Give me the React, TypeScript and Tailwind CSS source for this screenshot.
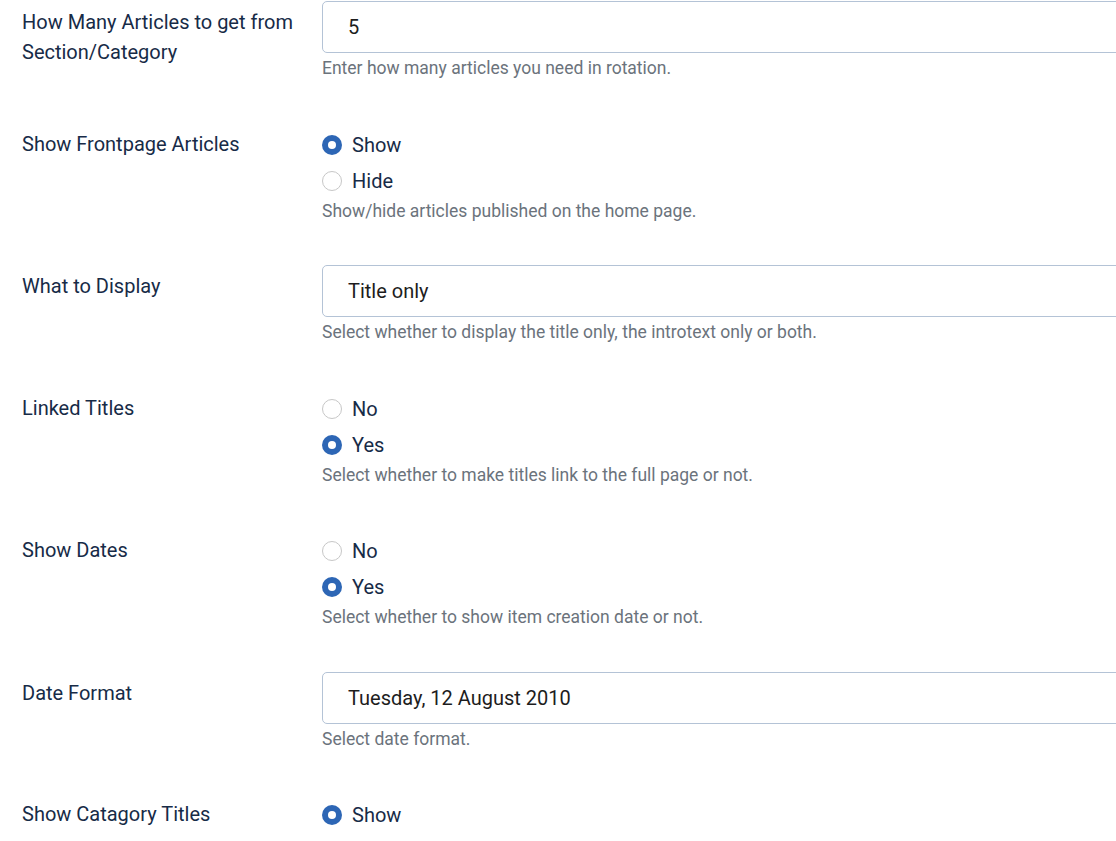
import React from "react";

const font = { fontFamily: "Roboto, 'Noto Sans', sans-serif" };

function Radio({ checked, label }: { checked: boolean; label: string }) {
  return (
    <div className="flex h-[36px] items-center">
      {checked ? (
        <span className="flex h-[20px] w-[20px] items-center justify-center rounded-full bg-[#2d66b5]">
          <span className="h-[8px] w-[8px] rounded-full bg-white" />
        </span>
      ) : (
        <span className="h-[20px] w-[20px] rounded-full border border-[#c7c7c7] bg-white" />
      )}
      <span className="ml-[10px] text-[20px] text-[#172b47]">{label}</span>
    </div>
  );
}

function Row({ label, children }: { label: React.ReactNode; children: React.ReactNode }) {
  return (
    <div className="mb-[43.5px] flex">
      <div className="w-[300px] shrink-0 pt-[6px] text-[20px] leading-[30px] text-[#172b47]">{label}</div>
      <div className="flex-1">{children}</div>
    </div>
  );
}

function Field({ value }: { value: string }) {
  return (
    <div className="flex h-[52px] w-[820px] items-center rounded-[5px] border border-[#b4c3d6] bg-white pl-[25px] text-[20px] text-[#1d1d1d]">
      {value}
    </div>
  );
}

function Help({ text, after }: { text: string; after: "input" | "radio" }) {
  return (
    <div className={`${after === "input" ? "mt-[4px]" : "mt-[1px]"} text-[17.5px] leading-[22px] text-[#6b737c]`}>{text}</div>
  );
}

export default function App() {
  return (
    <div className="min-h-[841px] overflow-hidden bg-white pl-[22px] pt-[1px]" style={font}>
      <Row label={<>How Many Articles to get from<br />Section/Category</>}>
        <Field value="5" />
        <Help after="input" text="Enter how many articles you need in rotation." />
      </Row>
      <Row label="Show Frontpage Articles">
        <div className="pt-[4px]">
          <Radio checked label="Show" />
          <Radio checked={false} label="Hide" />
        </div>
        <Help after="radio" text="Show/hide articles published on the home page." />
      </Row>
      <Row label="What to Display">
        <Field value="Title only" />
        <Help after="input" text="Select whether to display the title only, the introtext only or both." />
      </Row>
      <Row label="Linked Titles">
        <div className="pt-[4px]">
          <Radio checked={false} label="No" />
          <Radio checked label="Yes" />
        </div>
        <Help after="radio" text="Select whether to make titles link to the full page or not." />
      </Row>
      <Row label="Show Dates">
        <div className="pt-[4px]">
          <Radio checked={false} label="No" />
          <Radio checked label="Yes" />
        </div>
        <Help after="radio" text="Select whether to show item creation date or not." />
      </Row>
      <Row label="Date Format">
        <Field value="Tuesday, 12 August 2010" />
        <Help after="input" text="Select date format." />
      </Row>
      <Row label="Show Catagory Titles">
        <div className="pt-[4px]">
          <Radio checked label="Show" />
        </div>
      </Row>
    </div>
  );
}
